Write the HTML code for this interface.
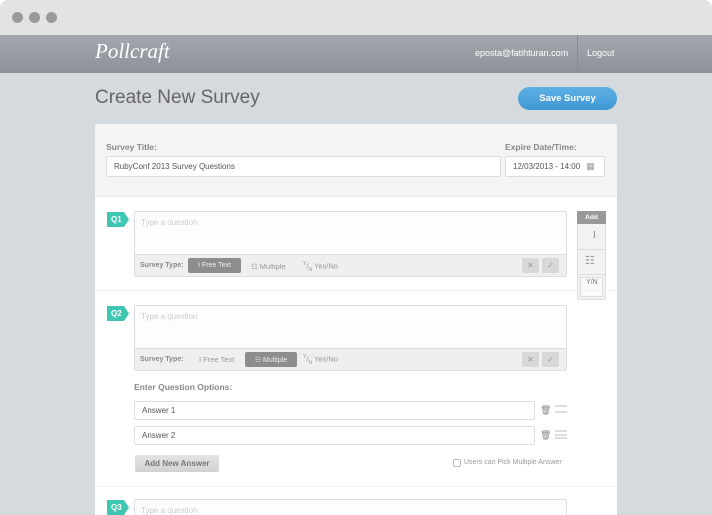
<!DOCTYPE html>
<html><head><style>
*{margin:0;padding:0;box-sizing:border-box}
body{width:712px;height:515px;overflow:hidden;background:#fff;font-family:"Liberation Sans",Arial,sans-serif;position:relative}
.a{position:absolute}
.win{left:0;top:0;width:712px;height:515px;background:#d5dadf;border-radius:8px 8px 0 0;overflow:hidden}
.top{left:0;top:0;width:712px;height:35px;background:#e3e3e3}
.dot{top:12px;width:11px;height:11px;border-radius:50%;background:#9a9a9a}
.nav{left:0;top:35px;width:712px;height:38px;background:linear-gradient(#a2a8ae,#8c9298)}
.inp{background:#fff;border:1px solid #ddd;border-radius:2px;font-size:8px;color:#555;padding-left:7px;display:flex;align-items:center}
.badge{width:22px;height:15px;background:#3fc6b3;color:#fff;font-size:8px;font-weight:bold;display:flex;align-items:center;padding-left:4px;clip-path:polygon(0 0,17px 0,22px 50%,17px 100%,0 100%)}
.q{background:#fdfdfd;border:1px solid #ddd;border-radius:2px}
.ph{color:#ccc;font-size:8px}
.tb{background:#efefef;border-top:1px solid #ddd;font-size:7px;color:#888}
.pill{background:#8d8d8d;color:#eee;border-radius:2px;font-size:7px;display:flex;align-items:center;justify-content:center}
.sb{width:17px;height:15px;background:#d8d8d8;border-radius:2px;color:#999;font-size:8px;display:flex;align-items:center;justify-content:center}
</style></head><body>
<div class="a win">
<div class="a top"></div>
<div class="a dot" style="left:12px"></div><div class="a dot" style="left:29px"></div><div class="a dot" style="left:46px"></div>
<div class="a nav"></div>
<div class="a" style="left:95px;top:39px;color:#fff;font-family:'Liberation Serif',serif;font-style:italic;font-size:21px">Pollcraft</div>
<div class="a" style="left:475px;top:48px;color:#fff;font-size:9px">eposta@fatihturan.com</div>
<div class="a" style="left:577px;top:35px;width:1px;height:38px;background:#858b91"></div>
<div class="a" style="left:587px;top:48px;color:#fff;font-size:9px">Logout</div>
<div class="a" style="left:95px;top:87px;color:#666;font-size:19px">Create New Survey</div>
<div class="a" style="left:518px;top:87px;width:99px;height:23px;border-radius:12px;background:linear-gradient(#5db1e5,#4096d4);color:#fff;font-size:9.5px;font-weight:bold;display:flex;align-items:center;justify-content:center">Save Survey</div>
<div class="a" style="left:95px;top:124px;width:522px;height:400px;background:#fff;border-radius:3px"></div>
<div class="a" style="left:95px;top:124px;width:522px;height:73px;background:#f4f4f4;border-radius:3px 3px 0 0;border-bottom:1px solid #ececec"></div>
<div class="a" style="left:106px;top:142px;font-size:8.5px;font-weight:bold;color:#888">Survey Title:</div>
<div class="a" style="left:505px;top:142px;font-size:8.5px;font-weight:bold;color:#888">Expire Date/Time:</div>
<div class="a inp" style="left:106px;top:156px;width:395px;height:21px">RubyConf 2013 Survey Questions</div>
<div class="a inp" style="left:505px;top:156px;width:100px;height:21px">12/03/2013 - 14:00 <span style="margin-left:6px;color:#999;font-size:9px">▦</span></div>

<div class="a badge" style="left:107px;top:212px">Q1</div>
<div class="a q" style="left:134px;top:211px;width:433px;height:66px"></div>
<div class="a ph" style="left:141px;top:218px">Type a question</div>
<div class="a tb" style="left:135px;top:254px;width:431px;height:22px"></div>
<div class="a" style="left:140px;top:262px;font-size:7px;font-weight:bold;color:#888">Survey Type:</div>
<div class="a pill" style="left:188px;top:258px;width:53px;height:15px">I Free Text</div>
<div class="a" style="left:251px;top:262px;font-size:7.5px;color:#999">☷ Multiple</div>
<div class="a" style="left:303px;top:261px;font-size:7.5px;color:#999"><sup style="font-size:5px">Y</sup>/<sub style="font-size:5px">N</sub> Yes/No</div>
<div class="a sb" style="left:522px;top:258px">✕</div><div class="a sb" style="left:542px;top:258px">✓</div>

<div class="a" style="left:577px;top:211px;width:29px;height:89px;background:#f2f2f2;border:1px solid #ddd;border-radius:2px"></div>
<div class="a" style="left:577px;top:211px;width:29px;height:13px;background:#999;color:#fff;font-size:6.5px;font-weight:bold;display:flex;align-items:center;justify-content:center">Add</div>
<div class="a" style="left:593px;top:230px;font-size:10px;color:#888">I</div>
<div class="a" style="left:578px;top:249px;width:27px;height:1px;background:#ddd"></div>
<div class="a" style="left:585px;top:254px;font-size:11px;color:#999">☷</div>
<div class="a" style="left:578px;top:274px;width:27px;height:1px;background:#ddd"></div>
<div class="a" style="left:580px;top:277px;width:23px;height:20px;background:#fafafa;border:1px solid #ddd;font-size:7px;color:#777;padding:1px 0 0 5px">Y/N</div>

<div class="a" style="left:96px;top:290px;width:520px;height:1px;background:#f0f0f0"></div>
<div class="a badge" style="left:107px;top:306px">Q2</div>
<div class="a q" style="left:134px;top:305px;width:433px;height:66px"></div>
<div class="a ph" style="left:141px;top:312px">Type a question</div>
<div class="a tb" style="left:135px;top:348px;width:431px;height:22px"></div>
<div class="a" style="left:140px;top:356px;font-size:7px;font-weight:bold;color:#888">Survey Type:</div>
<div class="a" style="left:199px;top:355px;font-size:7.5px;color:#999">I Free Text</div>
<div class="a pill" style="left:245px;top:352px;width:52px;height:15px">☷ Multiple</div>
<div class="a" style="left:303px;top:354px;font-size:7.5px;color:#999"><sup style="font-size:5px">Y</sup>/<sub style="font-size:5px">N</sub> Yes/No</div>
<div class="a sb" style="left:522px;top:352px">✕</div><div class="a sb" style="left:542px;top:352px">✓</div>

<div class="a" style="left:134px;top:382px;font-size:8.5px;font-weight:bold;color:#888">Enter Question Options:</div>
<div class="a inp" style="left:134px;top:401px;width:401px;height:19px">Answer 1</div>
<div class="a inp" style="left:134px;top:426px;width:401px;height:19px">Answer 2</div>
<div class="a" style="left:540px;top:405px;font-size:9px;color:#888">🗑</div>
<div class="a" style="left:540px;top:430px;font-size:9px;color:#888">🗑</div>
<div class="a" style="left:555px;top:405px;width:12px;height:8px;border-top:2px solid #ddd;border-bottom:2px solid #ddd"></div>
<div class="a" style="left:555px;top:430px;width:12px;height:9px;border-top:2px solid #ddd;border-bottom:2px solid #ddd"><div style="margin-top:1.5px;height:2px;background:#ddd"></div></div>
<div class="a" style="left:135px;top:455px;width:84px;height:17px;background:linear-gradient(#e4e4e4,#d2d2d2);border-radius:2px;color:#777;font-size:8px;font-weight:bold;display:flex;align-items:center;justify-content:center">Add New Answer</div>
<div class="a" style="left:453px;top:459px;width:8px;height:8px;border:1px solid #bbb;border-radius:2px;background:#fff"></div>
<div class="a" style="left:464px;top:459px;font-size:7px;color:#999">Users can Pick Multiple Answer</div>

<div class="a" style="left:96px;top:486px;width:520px;height:1px;background:#f0f0f0"></div>
<div class="a badge" style="left:107px;top:500px">Q3</div>
<div class="a q" style="left:134px;top:499px;width:433px;height:30px"></div>
<div class="a ph" style="left:141px;top:506px">Type a question</div>
</div>
</body></html>
